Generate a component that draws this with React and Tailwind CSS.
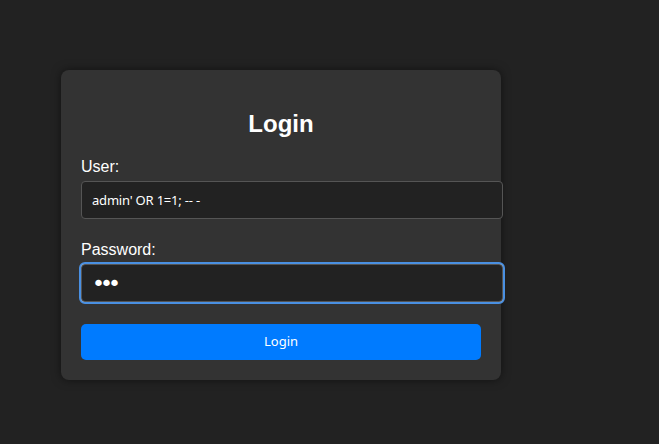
import React, { useState } from "react";

const App = () => {
  const [user, setUser] = useState("admin' OR 1=1; -- -");
  const [pass, setPass] = useState("abc");

  return (
    <main className="min-h-screen w-full bg-[#222222] pt-[70px] pl-[61px] font-['Liberation_Sans',Arial,sans-serif]">
      <div className="w-[440px] rounded-lg bg-[#333333] p-5 shadow-[0_0_10px_rgba(0,0,0,0.5)]">
        <h2 className="mt-5 mb-5 text-center text-2xl leading-7 font-bold text-white">
          Login
        </h2>
        <form
          className="flex flex-col"
          onSubmit={(e) => {
            e.preventDefault();
          }}
        >
          <label className="mb-[5px] text-base leading-[18px] text-white">User:</label>
          <input
            className="h-[38px] w-[422px] rounded-[4px] border border-[#555] bg-[#222222] px-[10px] font-['Noto_Sans',sans-serif] text-[13px] tracking-[-0.2px] text-white outline-none"
            value={user}
            onChange={(e) => setUser(e.target.value)}
          />
          <label className="mt-[22px] mb-[5px] text-base leading-[18px] text-white">
            Password:
          </label>
          <input
            type="password"
            className="h-[38px] w-[422px] rounded-[4px] border border-[#555] bg-[#222222] px-[10px] font-['DejaVu_Sans',sans-serif] text-[22px] leading-[22px] tracking-[-5px] text-white outline-2 outline-offset-0 outline-[#4a90e2] ring-1 ring-white/70"
            value={pass}
            onChange={(e) => setPass(e.target.value)}
          />
          <button
            type="submit"
            className="mt-[22px] h-9 w-[400px] rounded-[5px] bg-[#007bff] font-['Noto_Sans',sans-serif] text-[13px] text-white"
          >
            Login
          </button>
        </form>
      </div>
    </main>
  );
};

export default App;
